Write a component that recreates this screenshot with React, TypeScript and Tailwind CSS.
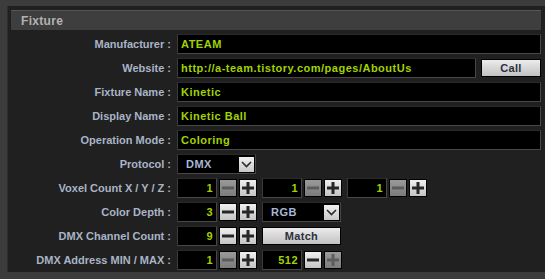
import React from "react";

const font = { fontFamily: '"Liberation Sans", Arial, sans-serif' };

function Label({ text }: { text: string }) {
  return (
    <div className="w-[161px] shrink-0 text-right text-[11px] font-bold text-[#a9b4c6] leading-none pr-[1px]">
      {text}
    </div>
  );
}

function TextBox({ value, className = "" }: { value: string; className?: string }) {
  return (
    <div
      className={`h-[20px] bg-black border border-[#474747] border-t-[#2a2a2a] border-l-[#3a3a3a] flex items-center pl-[3px] text-[11px] font-bold tracking-[0.5px] text-[#a2d200] ${className}`}
    >
      {value}
    </div>
  );
}

function Btn({ label, className = "" }: { label: string; className?: string }) {
  return (
    <div
      className={`h-[18px] border border-black bg-gradient-to-b from-[#ececec] to-[#c2c2c2] flex items-center justify-center text-[11px] font-bold tracking-[0.3px] text-[#2c3040] ${className}`}
    >
      {label}
    </div>
  );
}

function StepBtn({ plus, off }: { plus?: boolean; off?: boolean }) {
  const c = off ? "#5c5c5c" : "#262626";
  return (
    <div
      className={`w-[18px] h-[18px] border border-black flex items-center justify-center ${
        off ? "bg-gradient-to-b from-[#9a9a9a] to-[#7c7c7c]" : "bg-gradient-to-b from-[#f0f0f0] to-[#c4c4c4]"
      }`}
    >
      <svg width="12" height="12" viewBox="0 0 12 12">
        <rect x="0" y="4.5" width="12" height="3" fill={c} />
        {plus && <rect x="4.5" y="0" width="3" height="12" fill={c} />}
      </svg>
    </div>
  );
}

function Stepper({ value, minOff, maxOff }: { value: string; minOff?: boolean; maxOff?: boolean }) {
  return (
    <div className="flex items-center gap-[2px]">
      <div className="w-[40px] h-[20px] bg-black border border-[#474747] border-t-[#2a2a2a] border-l-[#3a3a3a] flex items-center justify-end pr-[3px] text-[11px] font-bold tracking-[0.5px] text-[#a2d200]">
        {value}
      </div>
      <StepBtn off={minOff} />
      <StepBtn plus off={maxOff} />
    </div>
  );
}

function Select({ value }: { value: string }) {
  return (
    <div className="w-[79px] h-[20px] bg-black border border-[#474747] border-t-[#2a2a2a] border-l-[#3a3a3a] flex items-center justify-between pl-[8px] pr-[1px]">
      <span className="text-[11px] font-bold tracking-[0.5px] text-[#a6b8d6]">{value}</span>
      <div className="w-[15px] h-[15px] bg-gradient-to-b from-[#f0f0f0] to-[#c8c8c8] flex items-center justify-center">
        <svg width="11" height="7" viewBox="0 0 11 7">
          <path d="M1 1 L5.5 5.5 L10 1" stroke="#2a2a2a" strokeWidth="1.6" fill="none" />
        </svg>
      </div>
    </div>
  );
}

function Row({ label, children }: { label: string; children: React.ReactNode }) {
  return (
    <div className="flex items-center h-[20px] gap-[5px]">
      <Label text={label} />
      <div className="flex items-center flex-1 gap-[5px]">{children}</div>
    </div>
  );
}

export default function App() {
  return (
    <div className="w-[545px] h-[279px] bg-[#3c3c3c] pt-[6px] pl-[7px] overflow-hidden" style={font}>
      <div className="h-[266px] bg-[#202020] border-l border-[#2e2e2e] pl-[3px] pr-[4px] pt-[4px]">
        <div className="h-[20px] bg-[#3e3e3e] border-t border-[#565656] flex items-center pl-[10px] text-[12px] font-bold tracking-[0.3px] text-[#b2b2b2]">
          Fixture
        </div>
        <div className="flex flex-col gap-[4px] mt-[4px]">
          <Row label="Manufacturer :">
            <TextBox value="ATEAM" className="flex-1" />
          </Row>
          <Row label="Website :">
            <TextBox value="http://a-team.tistory.com/pages/AboutUs" className="flex-1" />
            <Btn label="Call" className="w-[60px]" />
          </Row>
          <Row label="Fixture Name :">
            <TextBox value="Kinetic" className="flex-1" />
          </Row>
          <Row label="Display Name :">
            <TextBox value="Kinetic Ball" className="flex-1" />
          </Row>
          <Row label="Operation Mode :">
            <TextBox value="Coloring" className="flex-1" />
          </Row>
          <Row label="Protocol :">
            <Select value="DMX" />
          </Row>
          <Row label="Voxel Count X / Y / Z :">
            <Stepper value="1" minOff />
            <Stepper value="1" minOff />
            <Stepper value="1" minOff />
          </Row>
          <Row label="Color Depth :">
            <Stepper value="3" />
            <Select value="RGB" />
          </Row>
          <Row label="DMX Channel Count :">
            <Stepper value="9" />
            <Btn label="Match" className="w-[79px]" />
          </Row>
          <Row label="DMX Address MIN / MAX :">
            <Stepper value="1" minOff />
            <Stepper value="512" maxOff />
          </Row>
        </div>
      </div>
    </div>
  );
}
